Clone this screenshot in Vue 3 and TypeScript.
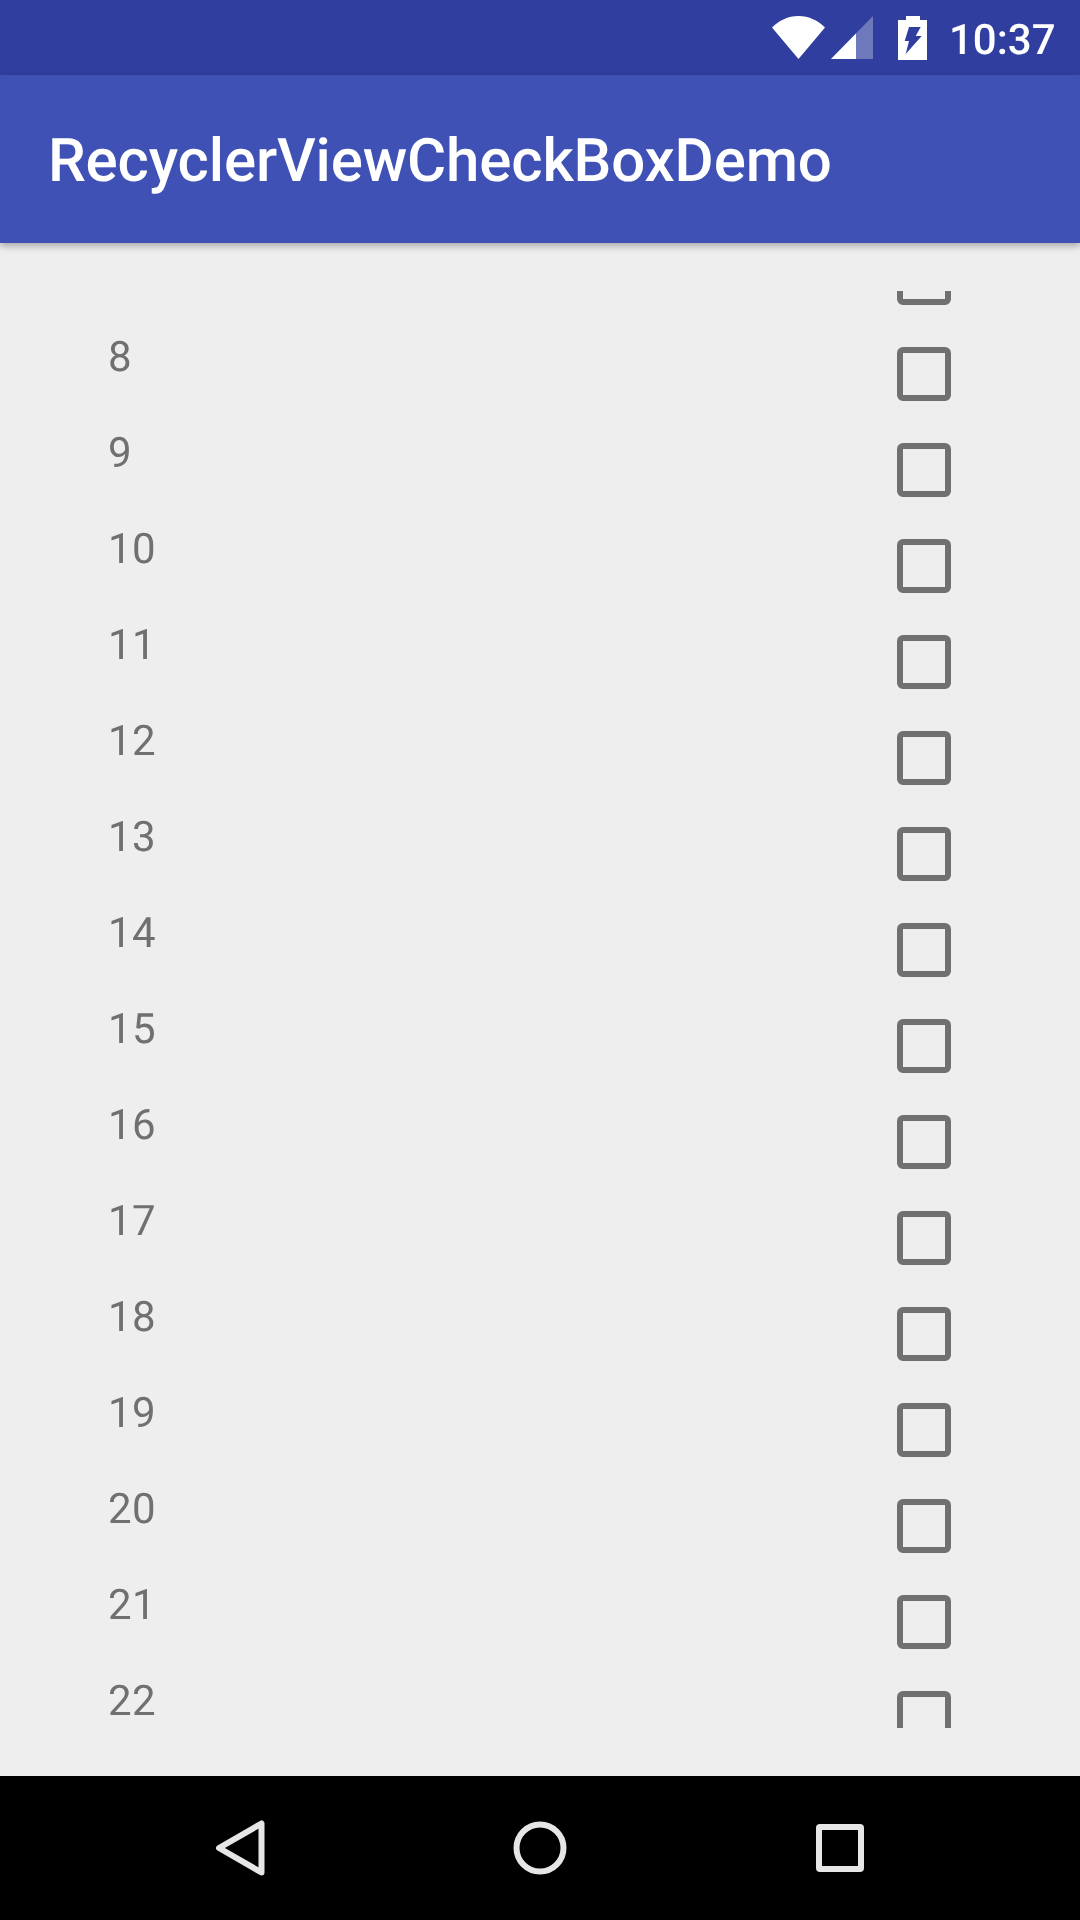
<script setup lang="ts">
// rows visible in the scrolled list, row 7 only shows the bottom of its checkbox
const rows: number[] = Array.from({ length: 16 }, (_, i) => i + 7)
</script>

<template>
  <div class="screen">
    <div class="status-bar">
      <svg class="wifi" width="53" height="43" viewBox="0 0 53 43">
        <path d="M26.5 43L0 11.5C7 4.5 16 0 26.5 0C37 0 46 4.5 53 11.5Z" fill="#fff" />
      </svg>
      <svg class="signal" width="42" height="43" viewBox="0 0 42 43">
        <path d="M0 43L42 0V43Z" fill="#fff" fill-opacity="0.3" />
        <path d="M0 43L25 17.4V43Z" fill="#fff" />
      </svg>
      <svg class="battery" width="29" height="44" viewBox="0 0 29 44">
        <path
          fill="#fff"
          fill-rule="evenodd"
          d="M8 0H22V4H29V44H0V4H8ZM11 11L6.7 25H11L7.7 38L23.7 20H17.7L22.7 11Z"
        />
      </svg>
      <span class="time">10:37</span>
    </div>

    <div class="app-bar">
      <span class="title">RecyclerViewCheckBoxDemo</span>
    </div>

    <div class="content">
      <div class="list">
        <div class="list-inner">
          <div v-for="n in rows" :key="n" class="row">
            <span v-if="n > 7" class="num">{{ n }}</span>
            <span class="check"></span>
          </div>
        </div>
      </div>
    </div>

    <div class="nav-bar">
      <div class="nav-cell">
        <svg width="50" height="56" viewBox="0 0 50 56">
          <path d="M4 28L46.5 3.5V52.5Z" class="nav-line" />
        </svg>
      </div>
      <div class="nav-cell">
        <svg width="54" height="54" viewBox="0 0 54 54">
          <circle cx="27" cy="27" r="23.5" class="nav-line" />
        </svg>
      </div>
      <div class="nav-cell">
        <span class="nav-square"></span>
      </div>
    </div>
  </div>
</template>

<style>
html,
body {
  margin: 0;
  background: #eeeeee;
}
</style>

<style scoped>
.screen {
  width: 1080px;
  height: 1920px;
  display: flex;
  flex-direction: column;
  background: #eeeeee;
  font-family: Roboto, "Liberation Sans", sans-serif;
  text-rendering: geometricPrecision;
  overflow: hidden;
}

.status-bar {
  height: 75px;
  flex-shrink: 0;
  display: flex;
  align-items: center;
  justify-content: flex-end;
  padding-right: 24px;
  background: #303f9f;
  color: #fff;
}

.signal {
  margin-left: 6px;
}

.battery {
  margin-left: 25px;
}

.time {
  margin-top: 6px;
  margin-left: 22px;
  font-size: 42px;
  font-weight: 500;
  line-height: 42px;
  will-change: transform;
}

.app-bar {
  position: relative;
  z-index: 1;
  height: 168px;
  flex-shrink: 0;
  display: flex;
  align-items: center;
  padding-left: 48px;
  background: #3f51b5;
  box-shadow: 0 3px 7px rgba(0, 0, 0, 0.3);
}

.title {
  margin-top: 3px;
  font-size: 60px;
  font-weight: 500;
  letter-spacing: -0.15px;
  color: #fff;
  will-change: transform;
}

.content {
  flex: 1;
  min-height: 0;
  display: flex;
  padding: 48px 0;
}

.list {
  flex: 1;
  overflow: hidden;
  will-change: transform;
}

.list-inner {
  margin-top: -61px;
}

.row {
  height: 96px;
  display: flex;
  align-items: flex-start;
  padding: 0 129px 0 108px;
}

.num {
  margin-top: 2px;
  font-size: 42px;
  line-height: 60px;
  letter-spacing: 0.3px;
  color: #707070;
}

.check {
  box-sizing: border-box;
  width: 54px;
  height: 54px;
  margin-top: 21px;
  margin-left: auto;
  border: 6px solid #707070;
  border-radius: 6px;
}

.nav-bar {
  height: 144px;
  flex-shrink: 0;
  display: flex;
  justify-content: center;
  background: #000;
}

.nav-cell {
  width: 300px;
  display: flex;
  align-items: center;
  justify-content: center;
}

.nav-line {
  fill: none;
  stroke: #e6e6e6;
  stroke-width: 6;
  stroke-linejoin: round;
}

.nav-square {
  box-sizing: border-box;
  width: 48px;
  height: 48px;
  border: 6px solid #e6e6e6;
  border-radius: 4px;
}
</style>
